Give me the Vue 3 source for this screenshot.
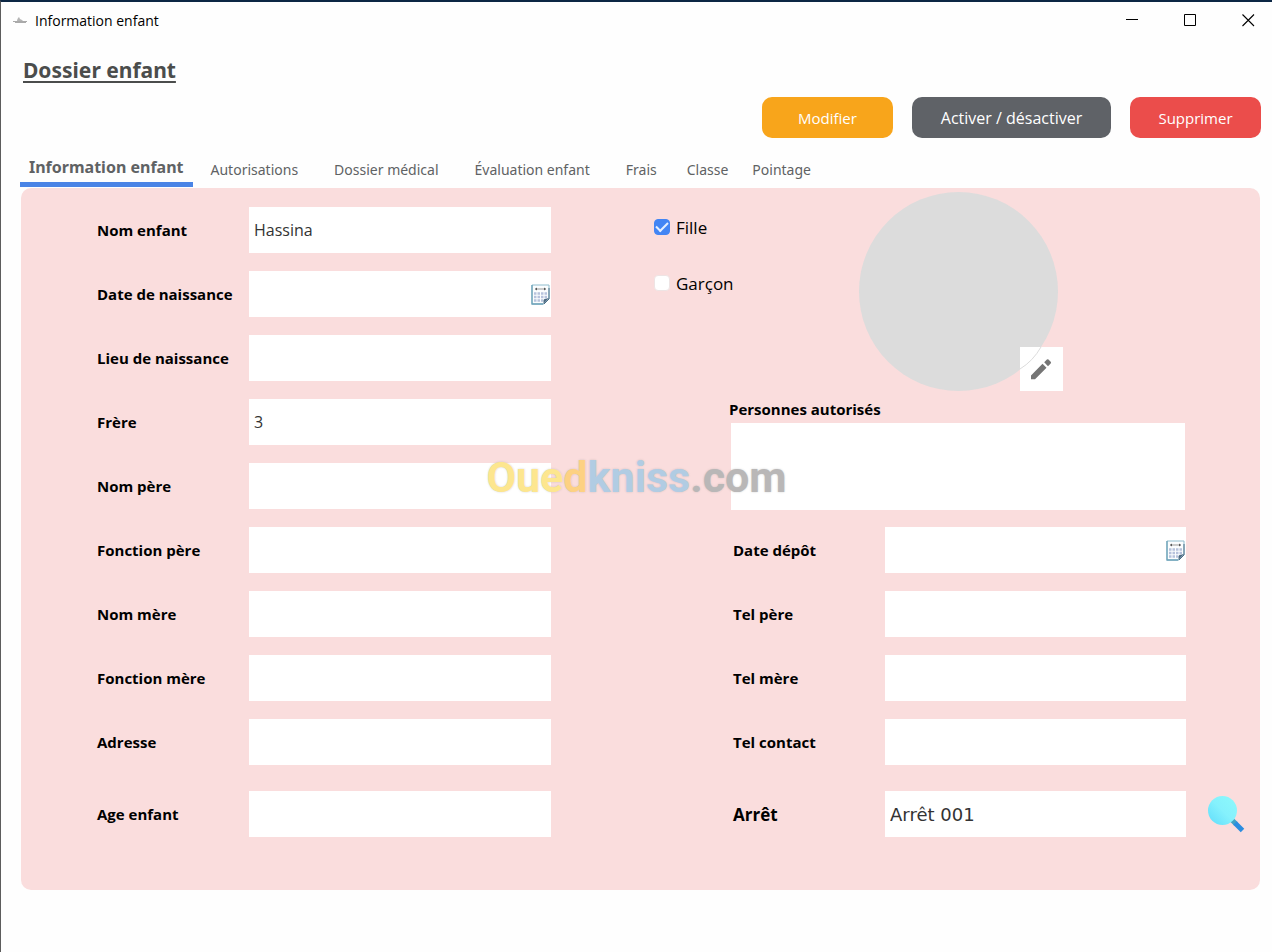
<script setup>
import { reactive, ref } from 'vue'

const tabs = [
  { label: 'Information enfant' },
  { label: 'Autorisations' },
  { label: 'Dossier médical' },
  { label: 'Évaluation enfant' },
  { label: 'Frais' },
  { label: 'Classe', compact: true },
  { label: 'Pointage', compact: true },
]
const activeTab = ref('Information enfant')

const childFields = [
  { id: 'nom-enfant', label: 'Nom enfant' },
  { id: 'date-naissance', label: 'Date de naissance', date: true },
  { id: 'lieu-naissance', label: 'Lieu de naissance' },
  { id: 'frere', label: 'Frère' },
  { id: 'nom-pere', label: 'Nom père' },
  { id: 'fonction-pere', label: 'Fonction père' },
  { id: 'nom-mere', label: 'Nom mère' },
  { id: 'fonction-mere', label: 'Fonction mère' },
  { id: 'adresse', label: 'Adresse' },
  { id: 'age-enfant', label: 'Age enfant', last: true },
]
const contactFields = [
  { id: 'date-depot', label: 'Date dépôt', date: true },
  { id: 'tel-pere', label: 'Tel père' },
  { id: 'tel-mere', label: 'Tel mère' },
  { id: 'tel-contact', label: 'Tel contact' },
  { id: 'arret', label: 'Arrêt', last: true, search: true },
]

const values = reactive({ 'nom-enfant': 'Hassina', frere: '3', arret: 'Arrêt 001' })
const authorized = ref('')
const girl = ref(true)
const boy = ref(false)
</script>

<template>
  <div class="window">
    <header class="titlebar">
      <svg class="app-icon" width="16" height="10" viewBox="0 0 16 10" aria-hidden="true">
        <path d="M1 6.500h14M3 7.500h11" stroke="#aaa" stroke-width="1" />
        <path d="M5 6c0-2 1-3 2-4l1 2 2 1 1 1z" fill="#b5b5b5" />
      </svg>
      <span class="window-title">Information enfant</span>
      <div class="window-controls">
        <button type="button" aria-label="Réduire">
          <svg width="13" height="13" viewBox="0 0 13 13"><path d="M0 5.500h12" stroke="#000" /></svg>
        </button>
        <button type="button" aria-label="Agrandir">
          <svg width="13" height="13" viewBox="0 0 13 13"><path d="M.5.5h11v11H.5z" fill="none" stroke="#000" /></svg>
        </button>
        <button type="button" aria-label="Fermer">
          <svg width="13" height="13" viewBox="0 0 13 13"><path d="M.5.5l11.500 11.500M12 .5L.5 12" stroke="#000" stroke-width="1.100" /></svg>
        </button>
      </div>
    </header>

    <main class="page">
      <h1>Dossier enfant</h1>

      <div class="actions">
        <button type="button" class="edit">Modifier</button>
        <button type="button" class="toggle">Activer / désactiver</button>
        <button type="button" class="delete">Supprimer</button>
      </div>

      <div class="tabs" role="tablist">
        <button
          v-for="tab in tabs"
          :key="tab.label"
          type="button"
          role="tab"
          :aria-selected="activeTab === tab.label"
          :class="{ active: activeTab === tab.label, compact: tab.compact }"
          @click="activeTab = tab.label"
        >{{ tab.label }}</button>
      </div>

      <form class="panel" @submit.prevent>
        <section class="child">
          <div v-for="f in childFields" :key="f.id" class="field" :class="{ last: f.last }">
            <label :for="f.id">{{ f.label }}</label>
            <div class="box">
              <input :id="f.id" v-model="values[f.id]" type="text" />
              <button v-if="f.date" type="button" class="calendar" aria-label="Choisir une date">
                <svg width="19" height="21" viewBox="0 0 19 21">
                  <path d="M1 1h17v14l-5 5H1z" fill="#fbfdfe" stroke="#8fbccd" />
                  <path d="M1 1v19h11" fill="none" stroke="#6da3b9" stroke-width="1.300" />
                  <path d="M18 4v11l-5 5" fill="none" stroke="#4b7088" />
                  <path d="M18 14l-5.500 6v-4l1-1z" fill="#4b6a82" />
                  <path d="M4 5h11" stroke="#999" /><path d="M4 5l2-1.500v3zM15 5l-2-1.500v3z" fill="#555" />
                  <path d="M3 9.500h13M3 13h13M3 16.500h9" stroke="#b7c2dc" stroke-width="2.300" stroke-dasharray="2.500 1" />
                </svg>
              </button>
            </div>
          </div>
        </section>

        <section class="details">
          <div class="identity">
            <div class="choices">
              <label><input v-model="girl" type="checkbox" />Fille</label>
              <label><input v-model="boy" type="checkbox" />Garçon</label>
            </div>
            <div class="avatar">
              <button type="button" class="photo-edit" aria-label="Modifier la photo">
                <svg width="43" height="44" viewBox="0 0 43 44">
                  <path d="M21 0Q13 14 0 22" fill="none" stroke="#dcdcdc" />
                  <path d="M11 28.500v3.700h4L26.500 20.700l-4-4zM28 19.200l2.700-2.700q.8-.9 0-1.700l-2.200-2.200q-.8-.7-1.600 0l-2.700 2.700z" fill="#757575" />
                </svg>
              </button>
            </div>
          </div>

          <div class="authorized">
            <label for="authorized">Personnes autorisés</label>
            <textarea id="authorized" v-model="authorized"></textarea>
          </div>

          <div class="contacts">
            <div v-for="f in contactFields" :key="f.id" class="field" :class="{ last: f.last, stop: f.search }">
              <label :for="f.id">{{ f.label }}</label>
              <div class="box">
                <input :id="f.id" v-model="values[f.id]" type="text" />
                <button v-if="f.date" type="button" class="calendar" aria-label="Choisir une date">
                  <svg width="19" height="21" viewBox="0 0 19 21">
                    <path d="M1 1h17v14l-5 5H1z" fill="#fbfdfe" stroke="#8fbccd" />
                    <path d="M1 1v19h11" fill="none" stroke="#6da3b9" stroke-width="1.300" />
                    <path d="M18 4v11l-5 5" fill="none" stroke="#4b7088" />
                    <path d="M18 14l-5.500 6v-4l1-1z" fill="#4b6a82" />
                    <path d="M4 5h11" stroke="#999" /><path d="M4 5l2-1.500v3zM15 5l-2-1.500v3z" fill="#555" />
                    <path d="M3 9.500h13M3 13h13M3 16.500h9" stroke="#b7c2dc" stroke-width="2.300" stroke-dasharray="2.500 1" />
                  </svg>
                </button>
              </div>
              <button v-if="f.search" type="button" class="search" aria-label="Rechercher un arrêt">
                <svg width="37" height="38" viewBox="0 0 37 38">
                  <defs>
                    <linearGradient id="lens" x1="1" y1="0" x2="0" y2="1">
                      <stop offset="0" stop-color="#8df9fb" /><stop offset=".5" stop-color="#85f1fd" /><stop offset="1" stop-color="#5fdcfb" />
                    </linearGradient>
                  </defs>
                  <path d="M24 25l4 4" stroke="#3fa3c6" stroke-width="5" />
                  <path d="M27 28l7.500 7.500" stroke="#2b8de0" stroke-width="5" />
                  <circle cx="14.500" cy="15.500" r="14.500" fill="url(#lens)" />
                </svg>
              </button>
            </div>
          </div>
        </section>
      </form>
    </main>

    <div class="watermark" aria-hidden="true">
      <span class="yellow">Oue</span><span class="orange">d</span><span class="blue">kniss</span><span class="grey">.com</span>
    </div>
  </div>
</template>

<style>
body { margin: 0; background: #fefefe; }
</style>

<style scoped>
* { box-sizing: border-box; }
.window {
  position: relative;
  min-height: 100vh;
  border-top: 2px solid #0c2744;
  border-left: 1px solid #5c5c5c;
  background: #fefefe;
  color: #000;
  font-family: "Open Sans", "Noto Sans", sans-serif;
}
button { border: 0; padding: 0; background: none; font: inherit; cursor: pointer; }
svg { display: block; }

.titlebar { display: flex; align-items: center; height: 36px; padding-left: 11px; }
.window-title { margin-left: 7px; font-size: 14px; }
.window-controls { display: flex; margin-left: auto; padding-right: 1px; }
.window-controls button { display: grid; place-items: center; width: 58px; height: 36px; }
.window-controls button:last-child { width: 46px; margin-left: 6px; }

.page { padding: 16px 11px 20px 20px; }
h1 {
  margin: 0 0 0 2px;
  color: #4b4d4c;
  font-family: "Noto Sans", sans-serif;
  font-size: 21px;
  font-weight: 700;
  line-height: 32px;
  text-decoration: underline;
  text-decoration-thickness: 2px;
  text-underline-offset: 3px;
}

.actions { display: flex; justify-content: flex-end; gap: 19px; margin-top: 11px; }
.actions button { width: 131px; height: 41px; border-radius: 10px; color: #fff; font-size: 15px; }
.actions .toggle { width: 199px; background: #5f6267; font-size: 16px; }
.actions .edit { background: #f8a51b; }
.actions .delete { background: #eb4d4b; }

.tabs { display: flex; align-items: stretch; height: 36px; margin: 13px 0 1px -1px; }
.tabs button { padding: 0 18px; color: #5f6264; font-family: "Noto Sans", sans-serif; font-size: 14px; white-space: nowrap; }
.tabs .compact { padding: 0 12px; }
.tabs .active { padding: 0 9px; border-bottom: 5px solid #4a84e6; font-size: 16px; font-weight: 700; }

.panel {
  display: grid;
  grid-template-columns: minmax(0, 454fr) minmax(0, 591fr);
  gap: 103px;
  margin-right: 1px;
  padding: 4px 15px 53px 76px;
  border-radius: 10px;
  background: #fadddd;
}
.child { display: flex; flex-direction: column; gap: 18px; padding-top: 15px; }
.field { display: flex; align-items: center; height: 46px; font-size: 15px; font-weight: 700; }
.field > label { flex: 0 0 152px; }
.field.last { margin-top: 8px; }
.box { display: flex; align-items: center; flex: 1; min-width: 0; height: 46px; background: #fff; }
.box input {
  flex: 1;
  min-width: 0;
  height: 46px;
  padding: 0 5px;
  border: 0;
  outline: 0;
  background: none;
  color: #333;
  font: 16px "Open Sans", "Noto Sans", sans-serif;
}
.calendar { margin-right: 1px; }

.identity { display: flex; }
.choices { display: flex; flex-direction: column; gap: 32px; flex: 0 0 205px; padding-top: 23px; }
.choices label { display: flex; align-items: center; gap: 6px; height: 24px; font-size: 17px; }
.choices input {
  appearance: none;
  display: grid;
  place-items: center;
  width: 16px;
  height: 16px;
  margin: 0;
  border: 1px solid #eee4e4;
  border-radius: 4px;
  background: #fff;
}
.choices input:checked { border-color: #4285f4; background: #4285f4; }
.choices input:checked::after {
  content: "";
  width: 10px;
  height: 5px;
  margin-top: -3px;
  border-bottom: 2px solid #e4efff;
  border-left: 2px solid #e4efff;
  transform: rotate(-45deg);
}
.avatar { position: relative; width: 199px; height: 199px; border-radius: 50%; background: #dcdcdc; }
.photo-edit { position: absolute; right: -5px; bottom: 0; background: #fff; }

.authorized { display: flex; flex-direction: column; padding: 0 60px 0 77px; }
.authorized label { height: 32px; padding-top: 6px; font-size: 15px; font-weight: 700; line-height: 24px; margin-left: -2px; }
.authorized textarea { height: 87px; padding: 5px; border: 0; outline: 0; resize: none; font: 16px "Open Sans", sans-serif; }

.contacts { display: flex; flex-direction: column; gap: 18px; padding: 17px 0 0 79px; }
.contacts .field { padding-right: 59px; }
.contacts .stop { padding-right: 0; }
.stop > label { font-size: 17px; }
.stop input { font-family: "DejaVu Sans", sans-serif; font-size: 18px; }
.search { margin-left: 22px; }

.watermark {
  position: absolute;
  inset: 0;
  display: flex;
  align-items: center;
  justify-content: center;
  pointer-events: none;
  font: 700 43px Roboto, sans-serif;
  text-shadow: 0 0 2px #9997;
}
.yellow { color: #fde68f; }
.orange { color: #fdd183; }
.blue { color: #b1cce3; }
.grey { color: #b9b7b7; }
</style>
